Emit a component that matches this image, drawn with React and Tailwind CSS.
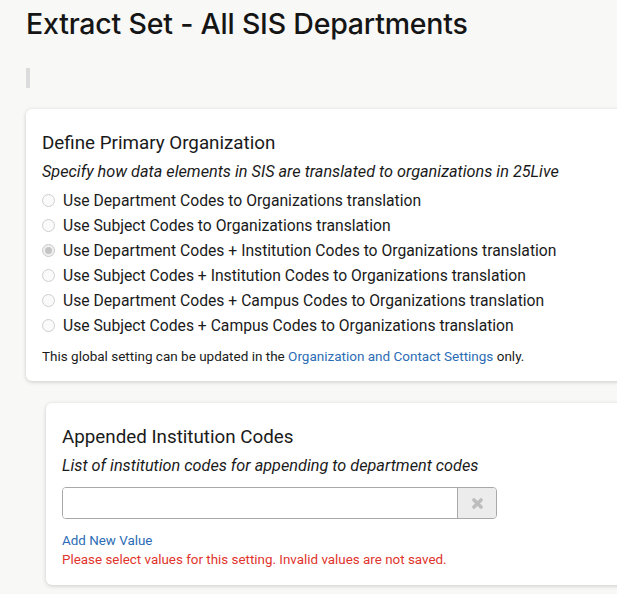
export default function App() {
  const options = [
    "Use Department Codes to Organizations translation",
    "Use Subject Codes to Organizations translation",
    "Use Department Codes + Institution Codes to Organizations translation",
    "Use Subject Codes + Institution Codes to Organizations translation",
    "Use Department Codes + Campus Codes to Organizations translation",
    "Use Subject Codes + Campus Codes to Organizations translation",
  ];
  const selected = 2;

  return (
    <div
      className="min-h-[594px] w-[617px] overflow-hidden bg-[#f8f8f7] text-[#1a1a1a]"
      style={{ fontFamily: "Roboto, 'Liberation Sans', sans-serif" }}
    >
      <div className="pl-[26px] pt-[8px]">
        <h1
          className="text-[28.5px] leading-[32px] font-medium tracking-[-0.2px] text-[#151515]"
          style={{ fontFamily: "Inter, 'Open Sans', sans-serif" }}
        >
          Extract Set - All SIS Departments
        </h1>

        <div className="mt-[28px] h-[20px] w-[4px] bg-[#dcdcdc]" />

        {/* Primary organization card */}
        <div className="mt-[21px] w-[620px] rounded-l-[6px] bg-white pl-[16px] pt-[22px] pb-[17px] shadow-[0_1px_4px_rgba(0,0,0,0.18)]">
          <h2 className="text-[18.8px] leading-[24px] text-[#1a1a1a]">Define Primary Organization</h2>
          <p className="mt-[7px] text-[16.25px] leading-[20px] italic text-[#1a1a1a]">
            Specify how data elements in SIS are translated to organizations in 25Live
          </p>
          <div className="mt-[6px] flex flex-col">
            {options.map((opt, i) => (
              <label key={opt} className="flex h-[25px] items-center">
                <span
                  className={
                    "flex h-[13px] w-[13px] items-center justify-center rounded-full border " +
                    (i === selected ? "border-[#c8c8c8] bg-[#f0f0f0]" : "border-[#cfcfcf] bg-[#fafafa]")
                  }
                >
                  {i === selected && <span className="h-[7px] w-[7px] rounded-full bg-[#c4c4c4]" />}
                </span>
                <span className="ml-[8px] text-[15.7px] leading-[20px] text-[#1a1a1a]">{opt}</span>
              </label>
            ))}
          </div>
          <p className="mt-[10px] text-[13.5px] leading-[16px] text-[#1a1a1a]">
            This global setting can be updated in the{" "}
            <a className="text-[#2b6cb5]">Organization and Contact Settings</a> only.
          </p>
        </div>

        {/* Appended institution codes card */}
        <div className="ml-[20px] mt-[22px] w-[600px] rounded-l-[6px] bg-white pl-[16px] pt-[22px] pb-[16px] shadow-[0_1px_4px_rgba(0,0,0,0.18)]">
          <h2 className="text-[18.8px] leading-[24px] text-[#1a1a1a]">Appended Institution Codes</h2>
          <p className="mt-[7px] text-[16.25px] leading-[20px] italic text-[#1a1a1a]">
            List of institution codes for appending to department codes
          </p>
          <div className="mt-[11px] flex h-[32px] w-[435px] overflow-hidden rounded-[4px] border border-[#a8a8a8]">
            <input className="h-full flex-1 bg-white outline-none" />
            <button className="flex h-full w-[39px] items-center justify-center border-l border-[#a8a8a8] bg-[#ececec]">
              <svg width="11" height="11" viewBox="0 0 10 10">
                <path d="M1.8 1.8 L8.2 8.2 M8.2 1.8 L1.8 8.2" stroke="#bdbdbd" strokeWidth="3.2" strokeLinecap="round" />
              </svg>
            </button>
          </div>
          <a className="mt-[13px] block text-[13.4px] leading-[18px] text-[#2b6cb5]">Add New Value</a>
          <p className="mt-[1px] text-[13.4px] leading-[18px] text-[#e0342c]">
            Please select values for this setting. Invalid values are not saved.
          </p>
        </div>
      </div>
    </div>
  );
}
